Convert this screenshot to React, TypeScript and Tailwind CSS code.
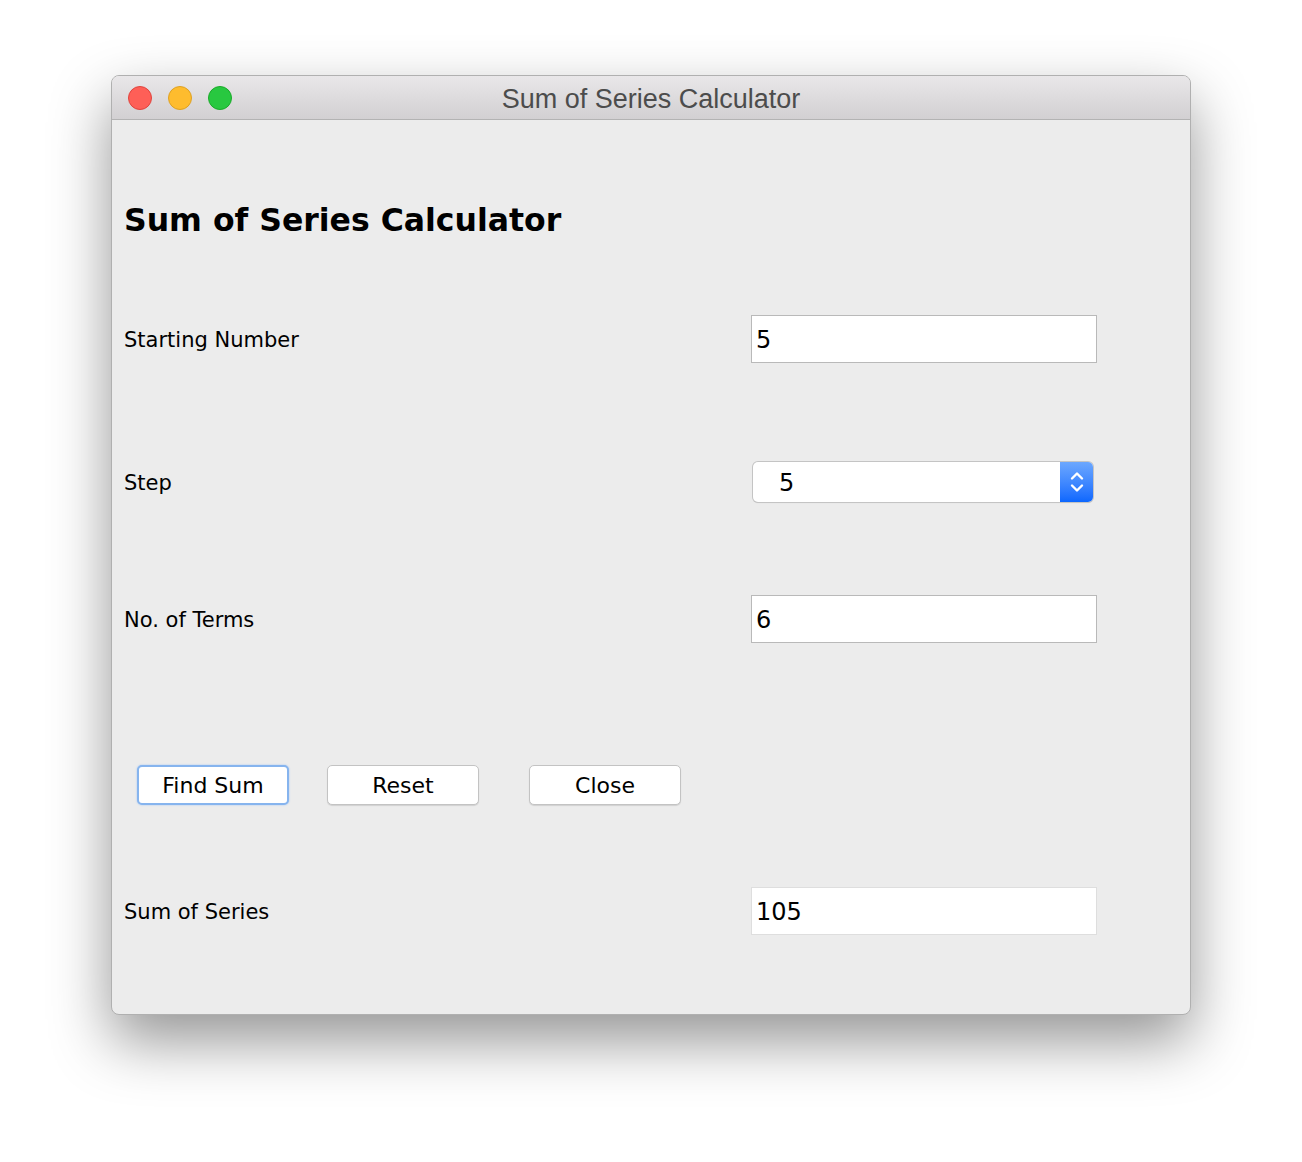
import { useState } from 'react'

const uiFont = { fontFamily: '"DejaVu Sans", Tahoma, sans-serif' }

function Field({ value, light }: { value: string; light?: boolean }) {
  return (
    <div
      className={`w-[346px] h-[48px] bg-white border flex items-center pl-[4px] pt-[2px] text-[24px] text-black ${light ? 'border-[#dedede]' : 'border-[#b9b9b9]'}`}
      style={uiFont}
    >
      {value}
    </div>
  )
}

function Combo({ value }: { value: string }) {
  return (
    <div className="ml-[2px] w-[340px] h-[40px] flex rounded-[5px] bg-white shadow-[0_0_0_1px_#c4c4c4,0_1px_1px_rgba(0,0,0,0.15)] overflow-hidden">
      <div className="flex-1 flex items-center pl-[26px] pt-[2px] text-[24px] text-black" style={uiFont}>
        {value}
      </div>
      <div className="w-[33px] h-full bg-gradient-to-b from-[#6ca7fe] to-[#0b67fe] flex items-center justify-center">
        <svg width="16" height="26" viewBox="0 0 16 26" fill="none" stroke="white" strokeWidth="2.4" strokeLinecap="round" strokeLinejoin="round">
          <path d="M3 9.5 L8 4.5 L13 9.5" />
          <path d="M3 16.5 L8 21.5 L13 16.5" />
        </svg>
      </div>
    </div>
  )
}

function Btn({ label, focused }: { label: string; focused?: boolean }) {
  return (
    <button
      className={`w-[152px] h-[40px] bg-white rounded-[5px] text-[22px] text-black flex items-center justify-center ${focused ? 'border-[2px] border-[#86b4ee] shadow-[0_0_2px_#9cc3f5]' : 'border border-[#c3c3c3] shadow-[0_1px_1px_rgba(0,0,0,0.12)]'}`}
      style={uiFont}
    >
      {label}
    </button>
  )
}

function Row({ label, children }: { label: string; children: React.ReactNode }) {
  return (
    <div className="flex items-center">
      <div className="w-[627px] pt-[4px] text-[21px] text-black" style={uiFont}>
        {label}
      </div>
      {children}
    </div>
  )
}

export default function App() {
  const [terms] = useState({ start: '5', step: '5', n: '6', sum: '105' })

  return (
    <div className="w-[1302px] h-[1162px] bg-white pt-[75px] pl-[111px]">
      <div className="w-[1080px] h-[940px] rounded-[8px] border border-[#b0b0b0] bg-[#ececec] overflow-hidden shadow-[0_26px_60px_rgba(0,0,0,0.42)] flex flex-col">
        <div className="h-[44px] shrink-0 bg-gradient-to-b from-[#e9e7e9] to-[#d2d0d2] border-b border-[#b3b3b3] flex items-center relative">
          <div className="flex items-center gap-[16px] pl-[16px]">
            <div className="w-[24px] h-[24px] rounded-full bg-[#fe5f57] border border-[#e0443e]" />
            <div className="w-[24px] h-[24px] rounded-full bg-[#febc2e] border border-[#dea123]" />
            <div className="w-[24px] h-[24px] rounded-full bg-[#28c840] border border-[#1aab29]" />
          </div>
          <div
            className="absolute inset-0 pt-[4px] flex items-center justify-center text-[27px] text-[#4c4c4c]"
            style={{ fontFamily: '"Liberation Sans", Arial, sans-serif' }}
          >
            Sum of Series Calculator
          </div>
        </div>

        <div className="flex flex-col pl-[12px]">
          <div className="h-[60px] mt-[70px] pt-[2px] flex items-center text-[31.5px] font-bold text-black" style={uiFont}>
            Sum of Series Calculator
          </div>
          <div className="mt-[65px] h-[48px]">
            <Row label="Starting Number">
              <Field value={terms.start} />
            </Row>
          </div>
          <div className="mt-[99px] h-[40px]">
            <Row label="Step">
              <Combo value={terms.step} />
            </Row>
          </div>
          <div className="mt-[93px] h-[48px]">
            <Row label="No. of Terms">
              <Field value={terms.n} />
            </Row>
          </div>
          <div className="mt-[122px] h-[40px] flex items-center pl-[13px] gap-[38px]">
            <Btn label="Find Sum" focused />
            <Btn label="Reset" />
            <div className="ml-[12px]">
              <Btn label="Close" />
            </div>
          </div>
          <div className="mt-[82px] h-[48px]">
            <Row label="Sum of Series">
              <Field value={terms.sum} light />
            </Row>
          </div>
        </div>
      </div>
    </div>
  )
}
